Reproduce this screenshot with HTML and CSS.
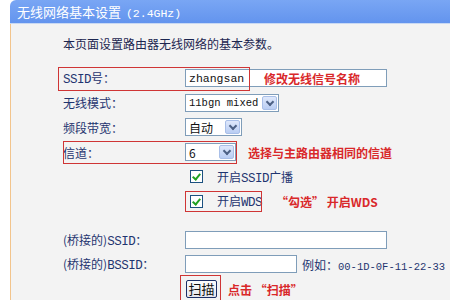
FILE: index.html
```html
<!DOCTYPE html>
<html>
<head>
    <meta charset="utf-8">
    <title>无线网络基本设置</title>
    <link rel="stylesheet" href="styles.css">
</head>
<body>
    <div class="page">
        <div class="head">无线网络基本设置 <span class="mono">(2.4GHz)</span></div>

        <div class="panel">
            <p class="intro">本页面设置路由器无线网络的基本参数。</p>

            <div class="row">
                <span class="mark mark-ssid"></span>
                <label><span class="mono">SSID</span>号：</label>
                <div class="field w-ssid"><span class="mono big">zhangsan</span><span class="note">修改无线信号名称</span></div>
            </div>

            <div class="row">
                <label>无线模式：</label>
                <div class="select w-mode"><span class="val mono">11bgn mixed</span><span class="arrow"></span></div>
            </div>

            <div class="row">
                <label>频段带宽：</label>
                <div class="select w-band"><span class="val">自动</span><span class="arrow"></span></div>
            </div>

            <div class="row">
                <span class="mark mark-chan"></span>
                <label>信道：</label>
                <div class="select w-chan"><span class="val">6</span><span class="arrow"></span></div>
                <span class="note-inline chan-note">选择与主路由器相同的信道</span>
            </div>

            <div class="row">
                <label></label>
                <span class="check"></span>
                <span class="check-text">开启<span class="mono">SSID</span>广播</span>
            </div>

            <div class="row">
                <span class="mark mark-wds"></span>
                <label></label>
                <span class="check"></span>
                <span class="check-text">开启<span class="mono">WDS</span></span>
                <span class="note-inline wds-note">“勾选” 开启WDS</span>
            </div>

            <div class="row bridged">
                <label>(桥接的)<span class="mono">SSID</span>：</label>
                <div class="field w-ssid"></div>
            </div>

            <div class="row">
                <label>(桥接的)<span class="mono">BSSID</span>：</label>
                <div class="field w-bssid"></div>
                <span class="hint">例如：<span class="mono">00-1D-0F-11-22-33</span></span>
            </div>

            <div class="row">
                <label></label>
                <span class="mark mark-scan"></span>
                <button class="btn">扫描</button>
                <span class="note-inline scan-note">点击 “扫描”</span>
            </div>
        </div>
    </div>
</body>
</html>
```

FILE: styles.css
```css
* {
    box-sizing: border-box;
    margin: 0;
    padding: 0;
}

body {
    background-color: white;
    font-family: "Noto Sans CJK SC", "DejaVu Sans", sans-serif;
    font-size: 12px;
    color: #1f3570;
    overflow: hidden;
    white-space: nowrap;
}

.mono {
    font-family: "Liberation Mono", "Noto Sans CJK SC", monospace;
    font-size: 10.5px;
}

.mono.big {
    font-size: 11.5px;
}

.row label .mono,
.check-text .mono {
    font-size: 12.5px;
    letter-spacing: -0.5px;
}

.page {
    padding-left: 10px;
    height: 300px;
}

.head {
    height: 24px;
    line-height: 24px;
    padding-left: 7px;
    color: white;
    font-size: 13px;
    background: linear-gradient(#79a6f4, #6394ee);
    border-top-left-radius: 6px;
    border-bottom: 1px solid #c9d9f3;
}

.head .mono {
    font-size: 11.5px;
    margin-left: 2px;
}

.panel {
    height: 276px;
    background-color: #f3f3f3;
    border-left: 1px solid #f2c48c;
    padding-left: 52px;
    padding-top: 12px;
}

.intro {
    line-height: 16px;
    color: #1c2650;
    margin-bottom: 14px;
}

.row {
    position: relative;
    display: flex;
    align-items: center;
    height: 24.6px;
}

.row label {
    width: 122px;
    flex: none;
}

.row.bridged {
    margin-top: 14px;
}

/* 输入框 */
.field {
    height: 18px;
    background: white;
    border: 1px solid #7f9db9;
    display: flex;
    align-items: center;
    padding-left: 3px;
    color: #111;
}

.w-ssid {
    width: 202px;
}

.w-bssid {
    width: 112px;
}

/* 下拉框 */
.select {
    height: 18px;
    background: white;
    border: 1px solid #7f9db9;
    display: flex;
    align-items: center;
    justify-content: space-between;
    padding-left: 3px;
    padding-right: 1px;
    color: #111;
}

.w-mode { width: 94px; }
.w-band { width: 57px; }
.w-chan { width: 51px; }

.arrow {
    width: 15px;
    height: 14px;
    background: linear-gradient(#dfe8fb, #b9cdf3);
    border: 1px solid #a9bfe8;
    border-radius: 2px;
    position: relative;
}

.arrow::after {
    content: "";
    position: absolute;
    left: 4px;
    top: 2px;
    width: 4px;
    height: 4px;
    border-right: 2px solid #4d6185;
    border-bottom: 2px solid #4d6185;
    transform: rotate(45deg);
}

/* 复选框 */
.check {
    width: 13px;
    height: 13px;
    margin-left: 5px;
    background: white;
    border: 1px solid #1c5180;
    position: relative;
}

.check::after {
    content: "";
    position: absolute;
    left: 3px;
    top: 1px;
    width: 3px;
    height: 6px;
    border-right: 2px solid #21a121;
    border-bottom: 2px solid #21a121;
    transform: rotate(40deg);
}

.check-text {
    margin-left: 14px;
}

.hint {
    margin-left: 5px;
}

.btn {
    margin-left: 1px;
    height: 18px;
    width: 31px;
    font-family: "Noto Sans CJK SC", sans-serif;
    font-size: 13px;
    line-height: 14px;
    color: #111;
    background: linear-gradient(#fdfdfd, #e4e4ec);
    border: 1px solid #1c2f66;
    border-radius: 2px;
}

/* 红色标注 */
.note {
    margin-left: auto;
    width: 122px;
    font-weight: bold;
    color: #d9282a;
}

.note-inline {
    margin-left: 6px;
    font-weight: bold;
    color: #d9282a;
}

.chan-note {
    margin-left: 12px;
}

.wds-note {
    margin-left: 14px;
}

.scan-note {
    margin-left: 11px;
}

.mark {
    position: absolute;
    border: 1.5px solid #cf3535;
}

.mark-ssid {
    left: -5px;
    top: 1px;
    width: 192px;
    height: 24px;
}

.mark-chan {
    left: 0;
    top: 1px;
    width: 174px;
    height: 23px;
}

.mark-wds {
    left: 122px;
    top: 2px;
    width: 77px;
    height: 21px;
}

.mark-scan {
    left: 117px;
    top: -2px;
    width: 41px;
    height: 26px;
}
```
